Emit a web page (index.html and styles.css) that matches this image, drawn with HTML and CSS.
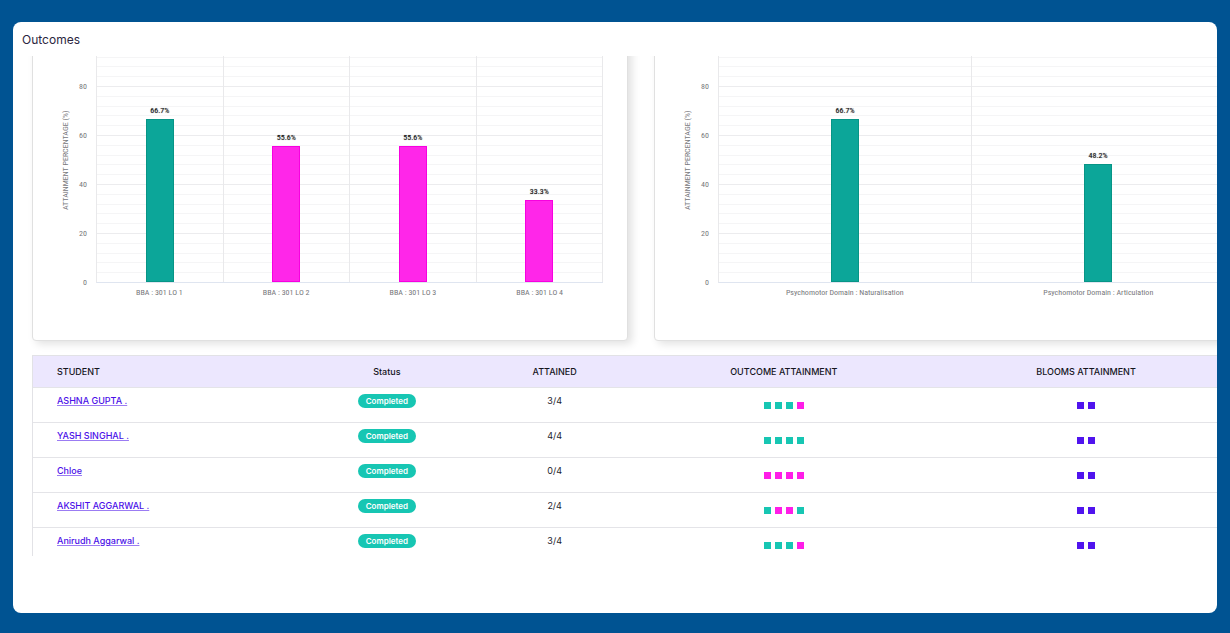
FILE: index.html
```html
<!DOCTYPE html>
<html lang="en">
<head>
<meta charset="utf-8">
<title>Outcomes</title>
<link rel="stylesheet" href="styles.css">
</head>
<body>
<main class="panel">
  <h1 class="title">Outcomes</h1>
  <div class="view">
    <div class="content">
      <section class="charts">
        <figure class="card">
          <div class="axis-title">ATTAINMENT PERCENTAGE (%)</div>
          <div class="ticks"><span>80</span><span>60</span><span>40</span><span>20</span><span>0</span></div>
          <div class="graph">
            <div class="plot">
              <div class="band"><span class="value">66.7%</span><i class="bar met" style="--value:66.7"></i></div>
              <div class="band"><span class="value">55.6%</span><i class="bar unmet" style="--value:55.6"></i></div>
              <div class="band"><span class="value">55.6%</span><i class="bar unmet" style="--value:55.6"></i></div>
              <div class="band"><span class="value">33.3%</span><i class="bar unmet" style="--value:33.3"></i></div>
            </div>
            <div class="names"><span>BBA : 301 LO 1</span><span>BBA : 301 LO 2</span><span>BBA : 301 LO 3</span><span>BBA : 301 LO 4</span></div>
          </div>
        </figure>
        <figure class="card">
          <div class="axis-title">ATTAINMENT PERCENTAGE (%)</div>
          <div class="ticks"><span>80</span><span>60</span><span>40</span><span>20</span><span>0</span></div>
          <div class="graph">
            <div class="plot">
              <div class="band"><span class="value">66.7%</span><i class="bar met" style="--value:66.7"></i></div>
              <div class="band"><span class="value">48.2%</span><i class="bar met" style="--value:48.2"></i></div>
            </div>
            <div class="names"><span>Psychomotor Domain : Naturalisation</span><span>Psychomotor Domain : Articulation</span></div>
          </div>
        </figure>
      </section>
      <table class="students">
        <colgroup><col class="c-student"><col class="c-status"><col class="c-attained"><col class="c-outcome"><col class="c-blooms"></colgroup>
        <thead>
          <tr><th scope="col">STUDENT</th><th scope="col">Status</th><th scope="col">ATTAINED</th><th scope="col">OUTCOME ATTAINMENT</th><th scope="col">BLOOMS ATTAINMENT</th></tr>
        </thead>
        <tbody>
          <tr>
            <td><a href="#">ASHNA GUPTA .</a></td><td><span class="badge">Completed</span></td><td>3/4</td>
            <td><div class="marks"><i class="yes"></i><i class="yes"></i><i class="yes"></i><i class="no"></i></div></td>
            <td><div class="marks"><i class="bloom"></i><i class="bloom"></i></div></td>
          </tr>
          <tr>
            <td><a href="#">YASH SINGHAL .</a></td><td><span class="badge">Completed</span></td><td>4/4</td>
            <td><div class="marks"><i class="yes"></i><i class="yes"></i><i class="yes"></i><i class="yes"></i></div></td>
            <td><div class="marks"><i class="bloom"></i><i class="bloom"></i></div></td>
          </tr>
          <tr>
            <td><a href="#">Chloe</a></td><td><span class="badge">Completed</span></td><td>0/4</td>
            <td><div class="marks"><i class="no"></i><i class="no"></i><i class="no"></i><i class="no"></i></div></td>
            <td><div class="marks"><i class="bloom"></i><i class="bloom"></i></div></td>
          </tr>
          <tr>
            <td><a href="#">AKSHIT AGGARWAL .</a></td><td><span class="badge">Completed</span></td><td>2/4</td>
            <td><div class="marks"><i class="yes"></i><i class="no"></i><i class="no"></i><i class="yes"></i></div></td>
            <td><div class="marks"><i class="bloom"></i><i class="bloom"></i></div></td>
          </tr>
          <tr>
            <td><a href="#">Anirudh Aggarwal .</a></td><td><span class="badge">Completed</span></td><td>3/4</td>
            <td><div class="marks"><i class="yes"></i><i class="yes"></i><i class="yes"></i><i class="no"></i></div></td>
            <td><div class="marks"><i class="bloom"></i><i class="bloom"></i></div></td>
          </tr>
        </tbody>
      </table>
    </div>
  </div>
</main>
</body>
</html>
```
FILE: styles.css
```css
* { box-sizing: border-box; }

body {
  margin: 0;
  height: 100vh;
  padding: 22px 13px 20px;
  background: #005392;
  font-family: Inter, "Liberation Sans", sans-serif;
  font-size: 9px;
  color: #22222c;
}

.panel {
  height: 100%;
  display: flex;
  flex-direction: column;
  padding-bottom: 57px;
  background: #fff;
  border-radius: 8px;
  overflow: hidden;
}

.title {
  flex: none;
  margin: 0;
  padding: 2px 9px 0;
  font-size: 12px;
  line-height: 32px;
  font-weight: 400;
  color: #2b2540;
}

/* The content is wider than the view and runs out on the right. */
.view {
  flex: 1;
  min-height: 0;
  padding-left: 19px;
  overflow: hidden;
}
.content { margin-right: -33px; }

.charts {
  display: grid;
  grid-template-columns: 1fr 1fr;
  gap: 26px;
  margin-top: -12px;
}

.card {
  min-width: 0;
  display: flex;
  margin: 0;
  padding: 11px 24px 33px 28px;
  border: 1px solid #e0e0e0;
  border-radius: 4px;
  background: #fff;
  box-shadow: 4px 3px 8px rgba(0, 0, 0, 0.12);
  font-family: "Roboto Condensed", Roboto, "Liberation Sans", sans-serif;
  font-size: 8px;
  line-height: 10px;
  color: #77777b;
}

.axis-title {
  width: 10px;
  height: 208px;
  writing-mode: vertical-rl;
  transform: rotate(180deg);
  text-align: center;
  white-space: nowrap;
}

.ticks {
  width: 16px;
  margin-right: 9px;
  padding-top: 6px;
}
.ticks span {
  display: block;
  line-height: 49px;
  text-align: right;
}

.graph { flex: 1; min-width: 0; }

.plot {
  height: 227px;
  display: flex;
  border-left: 1px solid #e9e9eb;
  border-bottom: 1px solid #dfe5f0;
  background: linear-gradient(to top,
    #ececee 1px, transparent 1px 10px,
    #f5f5f6 10px 11px, transparent 11px 20px,
    #f5f5f6 20px 21px, transparent 21px 29px,
    #f5f5f6 29px 30px, transparent 30px 39px,
    #f5f5f6 39px 40px, transparent 40px) left bottom / 100% 49px border-box;
}

.band {
  flex: 1;
  display: flex;
  flex-direction: column;
  align-items: center;
  justify-content: flex-end;
  border-right: 1px solid #e9e9eb;
}
.value {
  margin-bottom: 3px;
  color: #111;
  text-shadow: 0 0 1px #888;
}
.bar {
  width: 28px;
  height: round(calc(var(--value) * 2.45px), 1px);
  border: 1px solid;
}
.met { background: #0ca699; border-color: #079586; }
.unmet { background: #ff26e9; border-color: #f800e0; }

.names {
  display: flex;
  padding-top: 5px;
}
.names span {
  flex: 1;
  text-align: center;
  white-space: nowrap;
}

.students {
  width: 100%;
  margin-top: 14px;
  table-layout: fixed;
  border-collapse: separate;
  border-spacing: 0;
  border: 1px solid #e2e2e6;
  border-bottom: 0;
}
.c-student { width: 22.7%; }
.c-status { width: 12.8%; }
.c-attained { width: 14.8%; }
.c-outcome { width: 22.9%; }
.c-blooms { width: 26.8%; }

.students th,
.students td {
  padding: 0;
  border-bottom: 1px solid #e4e4e8;
  text-align: center;
}
.students th {
  height: 32px;
  background: #ece7fe;
  font-weight: 500;
  color: #15151d;
}
.students td {
  height: 35px;
  padding-top: 6px;
  vertical-align: top;
  line-height: 14px;
}
.students th:first-child,
.students td:first-child {
  padding-left: 24px;
  text-align: left;
}
.students a {
  color: #4b0fe8;
  font-weight: 500;
  text-decoration: underline #9b7cf3;
  text-underline-offset: 1px;
}

.badge {
  display: block;
  width: 58px;
  margin: 0 auto;
  border-radius: 7px;
  background: #17c6b3;
  color: #fff;
  font-size: 8px;
  font-weight: 600;
}

.marks {
  display: flex;
  justify-content: center;
  gap: 4px;
  padding-top: 8px;
}
.marks i { width: 7px; height: 7px; }
.yes { background: #17c6b3; }
.no { background: #ff1de8; }
.bloom { background: #5014ee; }
```
